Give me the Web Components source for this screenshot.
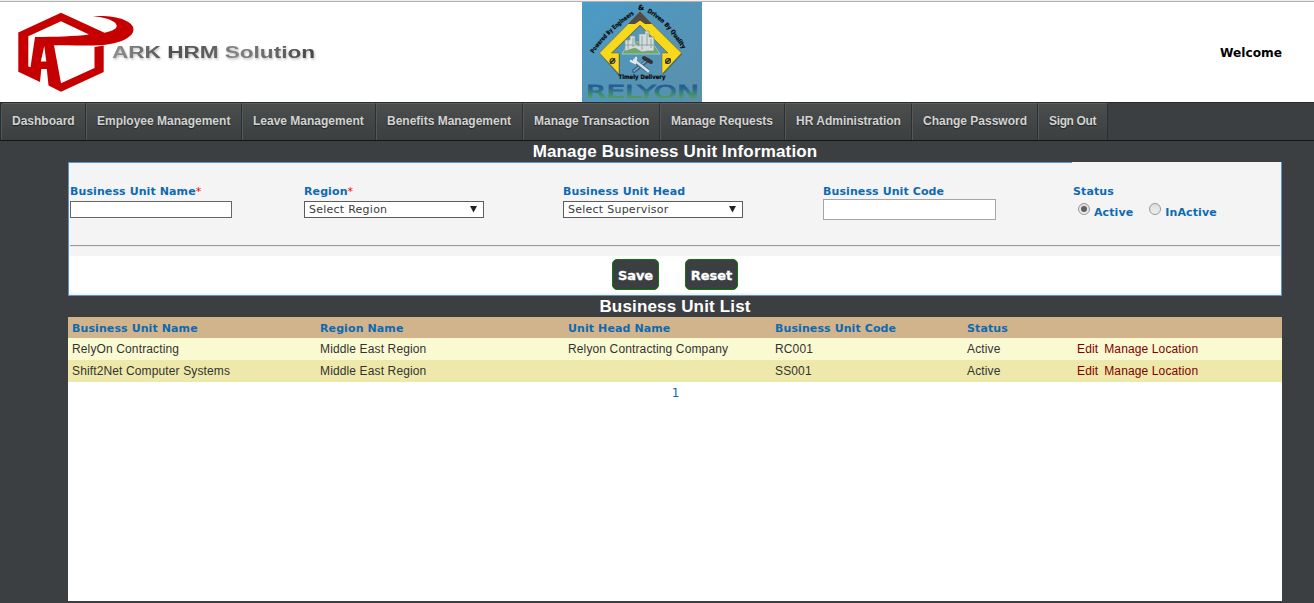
<!DOCTYPE html>
<html lang="en">
<head>
<meta charset="utf-8">
<title>Manage Business Unit Information</title>
<style>
html,body{margin:0;height:100%}
body{background:#3b3f42;overflow:hidden;font:12px "Liberation Sans",Arial,sans-serif}
</style>
</head>
<body>
<hrm-page></hrm-page>
<script>
const define = (name, html, setup) => customElements.define(name, class extends HTMLElement {
  constructor() {
    super();
    const t = document.createElement('template');
    t.innerHTML = html;
    this.attachShadow({mode: 'open'}).append(t.content.cloneNode(true));
  }
  connectedCallback() { if (setup) setup(this, this.shadowRoot); }
});

define('ark-logo', `
<style>:host{display:block;width:320px;height:90px}svg{display:block}
text{font:bold 16.800px "Liberation Sans",Arial,sans-serif}</style>
<svg width="320" height="90" viewBox="0 10 320 90">
 <defs>
  <linearGradient id="g" x1="0" x2="1"><stop offset="0" stop-color="#929292"/><stop offset=".28" stop-color="#505050"/><stop offset=".5" stop-color="#606060"/><stop offset=".6" stop-color="#858585"/><stop offset="1" stop-color="#444"/></linearGradient>
  <filter id="s" x="-5%" y="-30%" width="110%" height="180%"><feDropShadow dx="1" dy="1.5" stdDeviation=".8" flood-color="#888" flood-opacity=".55"/></filter>
 </defs>
 <g fill="#c60000">
  <path fill-rule="evenodd" d="M18.3 32.5 61 12.8 104.500 32.700C113 31 117 28.500 116.700 25.500 116 21 106 17.500 93 16.300 115 14.800 133.500 20.500 133.500 29.500 133.500 38 118 43.700 103 45 88 46 70 45.300 54 45.300L61 83.200 94.500 68V47L103.700 45.500V72L61 91.700 48.500 85.500 46.800 69H41.300L40 82 18.300 71.800ZM28.300 36.200V66.500L30.500 67.200 35 37C55 36.800 75 36.500 89 34.500L61 21.300ZM44.300 46 40.800 61.500H46.300Z"/>
 </g>
 <text x="112" y="58.300" textLength="203" lengthAdjust="spacingAndGlyphs" fill="url(#g)" filter="url(#s)">ARK HRM Solution</text>
</svg>`);

define('relyon-logo', `
<style>:host{display:block;width:120px;height:100px}svg{display:block}
.a{font:bold 6px "DejaVu Sans",sans-serif;fill:#080808;stroke:#080808;stroke-width:.2px}
.r{font:18.500px "DejaVu Sans",sans-serif}</style>
<svg width="120" height="100" viewBox="582 2 120 100">
 <defs>
  <linearGradient id="bg" x1="0" y1="0" x2="1" y2="1"><stop stop-color="#4a9bc6"/><stop offset="1" stop-color="#5c8fab"/></linearGradient>
  <linearGradient id="t" x1="0" y1="0" x2="0" y2="1"><stop offset=".3" stop-color="#275f91"/><stop offset=".65" stop-color="#3d8e72"/><stop offset="1" stop-color="#6daf50"/></linearGradient>
  <path id="l" d="M593.500 53.500Q609 31 636 13"/><path id="q" d="M647 12Q668 24 683 50"/>
 </defs>
 <rect x="582" y="2" width="120" height="100" fill="url(#bg)"/>
 <path d="M641 13 682.500 54 663 75V54H669L640 26 611.500 54H620V75H618L600 54Z" fill="#333" opacity=".4"/>
 <path d="M640 12 681.500 53 662 74V53H668L640 25 611.500 53H619V74L599.500 53Z" fill="#f7d81b" stroke="#74651c" stroke-width=".5"/>
 <path d="M640 11.500 652 24H645L640 20.500 635 24H628Z" fill="#514c43"/>
 <g stroke="#222" fill="#c8ad24"><circle cx="612.500" cy="61" r="2.600"/><circle cx="668" cy="61" r="2.600"/><path d="M610 63.500 615 58.500M665.500 63.500 670.500 58.500" stroke-width="1.500"/></g>
 <path d="M629 42H652L660 54H622Z" fill="#69a96a" stroke="#c6d5c4" stroke-width=".7"/>
 <path d="M625 51V40H630V36H635V43L639 46V34H645V31H649V37H654V51H647L642 52 635 48Z" fill="#d6dcda" stroke="#839990" stroke-width=".7"/>
 <path d="M628 39V49M633 38V47M642 36V50M647 33V46M651 39V48M625 45H654" stroke="#829b96" stroke-width=".8"/>
 <g fill="none" stroke-linecap="round"><path d="M648 60 634 71" stroke="#315c8b" stroke-width="4"/><path d="M646 61 634 71" stroke="#8dacc5" stroke-width="1.500"/><path d="M634 61 647 70" stroke="#48647c" stroke-width="4"/><path d="M634 60 648 71" stroke="#d9e2e6" stroke-width="2.500"/><path d="M644 58 651 62" stroke="#333" stroke-width="4"/><path d="M631 61 635 63 636 58" stroke="#e4e8e8" stroke-width="2.500"/></g>
 <text class="a"><textPath href="#l" textLength="57" lengthAdjust="spacingAndGlyphs">Powered By Engineers</textPath></text>
 <text class="a" x="638" y="9.800" style="font-size:7px">&amp;</text>
 <text class="a"><textPath href="#q" textLength="52" lengthAdjust="spacingAndGlyphs">Driven By Quality</textPath></text>
 <text class="a" x="618.500" y="79" textLength="47" lengthAdjust="spacingAndGlyphs">Timely Delivery</text>
 <text class="r" x="586" y="98" textLength="113" lengthAdjust="spacingAndGlyphs" fill="url(#t)" stroke="url(#t)" stroke-width=".9">RELYON</text>
</svg>`);

define('nav-item', `
<style>:host{display:block;box-sizing:border-box;height:37px;padding-left:10px;border-left:1px solid #555858;border-right:1px solid #2d3032;border-top:1px solid #5b5e5e;background:linear-gradient(#4b4e4d,#3b3f40);color:#d3d3d3;font:bold 12px/34px "Liberation Sans",Arial,sans-serif;white-space:nowrap;text-shadow:0 1px 1px #222}
:host(:first-child){border-radius:3px 0 0 3px}
:host(:last-child){letter-spacing:-.35px}</style><slot></slot>`, el => el.style.width = el.getAttribute('w') + 'px');

define('section-title', `
<style>:host{display:block;height:21px;text-align:center;color:#fff;font:bold 17px/22px "Liberation Sans",Arial,sans-serif;letter-spacing:.16px}</style><slot></slot>`);

define('form-field', `
<style>:host{display:block;font:bold 11px/15px "DejaVu Sans",Verdana,sans-serif;letter-spacing:.1px;color:#0d6ab2}
i{font-style:normal;font-weight:normal;color:red}label{display:block;height:14px;white-space:nowrap}</style>
<label><span></span><i></i></label><slot></slot>`, (el, r) => {
  r.querySelector('span').textContent = el.getAttribute('label');
  if (el.hasAttribute('required')) r.querySelector('i').textContent = '*';
});

define('text-box', `
<style>:host{display:block;box-sizing:border-box;background:#fff;border:1px solid #666;width:162px;height:17px;margin-top:3px}
:host([large]){width:173px;height:21px;border-color:#a5a5a5;margin-top:1px}</style>`);

define('select-box', `
<style>:host{display:flex;justify-content:space-between;box-sizing:border-box;background:#fff;border:1px solid #5c5c5c;width:180px;height:17px;margin-top:3px;padding:0 6px 0 4px;color:#3b3b3b;font:11px/16px "DejaVu Sans",Verdana,sans-serif;letter-spacing:.25px}
svg{margin-top:4px}</style><slot></slot><svg width="7" height="7"><path d="M0 0H7L3.500 6.500Z" fill="#222"/></svg>`);

define('radio-option', `
<style>:host{display:flex;gap:4px;line-height:14px}
b{box-sizing:border-box;width:12px;height:12px;border:1px solid #999;border-radius:50%;background:linear-gradient(#ddd,#eee);display:grid;place-items:center}
:host([checked]) b::after{content:"";width:6px;height:6px;border-radius:50%;background:#606060}
span{padding-top:3px}</style><b></b><span><slot></slot></span>`);

define('action-button', `
<style>:host{display:block;box-sizing:border-box;height:31px;border:1px solid #087b08;border-radius:5px;background:#3b3f42;color:#fff;font:bold 13px/31px "DejaVu Sans",Verdana,sans-serif;text-align:center;-webkit-text-stroke:.3px #fff;letter-spacing:-.05px}</style><slot></slot>`);

define('unit-row', `
<style>:host{display:grid;grid-template-columns:248px 248px 207px 192px 110px 1fr;padding-left:4px;height:22px;font:12px/22px "Liberation Sans",Arial,sans-serif;letter-spacing:.13px;color:#333;background:#fafad2;white-space:nowrap}
:host([alt]){background:#eee8aa}
:host([head]){background:#d2b48c;height:21px;font:bold 11px/23px "DejaVu Sans",Verdana,sans-serif;letter-spacing:.1px;color:#0d6ab2}
.links{display:flex;gap:6px;color:maroon}</style>`, (el, r) => {
  el.getAttribute('cells').split('|').forEach(text => {
    const s = document.createElement('span'); s.textContent = text; r.append(s);
  });
  if (!el.hasAttribute('head')) {
    const links = document.createElement('span'); links.className = 'links';
    links.innerHTML = '<span>Edit</span><span>Manage Location</span>'; r.append(links);
  }
});

define('hrm-page', `
<style>
:host{display:block}
header{box-sizing:border-box;height:102px;background:#fff;border-top:1px solid #eee;display:grid;grid-template-columns:582px 120px 1fr;box-shadow:inset 0 1px #b2b2b2}
ark-logo{margin-top:9px}relyon-logo{margin-top:1px}
.welcome{justify-self:end;margin:44px 32px 0 0;font:bold 12.200px/16px "DejaVu Sans",Verdana,sans-serif;color:#000}
nav{box-sizing:border-box;height:39px;display:flex;border:solid #2a2d2f;border-width:1px 0 1px 1px;border-bottom-color:#141516}
main{width:1214px;margin-left:68px}
.panel{box-sizing:border-box;height:134px;background:#f4f4f4 linear-gradient(#5b93cb,#5b93cb) 0 0/1003px 1px no-repeat;border:1px solid #5b93cb;border-top:0;display:flex;flex-direction:column}
.fields{height:61px;padding:22px 0 0 1px;display:grid;grid-template-columns:234px 259px 260px 250px 1fr}
.status{display:flex;gap:16px;margin:5px 0 0 5px}
.rule{height:1px;margin:0 1px;background:#999;box-shadow:0 1px #e9eaea}
.buttons{height:37px;margin-top:10px;background:#fff;display:flex;padding:3px 0 0 543px;box-sizing:border-box;gap:26px}
.list{height:284px;background:#fff}
.pager{text-align:center;color:#0d6ab2;font:12px/22px "DejaVu Sans",sans-serif;padding-left:1px}
</style>
<header><ark-logo></ark-logo><relyon-logo></relyon-logo><div class="welcome">Welcome</div></header>
<nav>
<nav-item w="85">Dashboard</nav-item><nav-item w="156">Employee Management</nav-item><nav-item w="134">Leave Management</nav-item><nav-item w="147">Benefits Management</nav-item><nav-item w="137">Manage Transaction</nav-item><nav-item w="125">Manage Requests</nav-item><nav-item w="127">HR Administration</nav-item><nav-item w="126">Change Password</nav-item><nav-item w="70">Sign Out</nav-item>
</nav>
<main>
<section-title>Manage Business Unit Information</section-title>
<div class="panel">
 <div class="fields">
  <form-field label="Business Unit Name" required><text-box></text-box></form-field>
  <form-field label="Region" required><select-box>Select Region</select-box></form-field>
  <form-field label="Business Unit Head"><select-box>Select Supervisor</select-box></form-field>
  <form-field label="Business Unit Code"><text-box large></text-box></form-field>
  <form-field label="Status"><div class="status"><radio-option checked>Active</radio-option><radio-option>InActive</radio-option></div></form-field>
 </div>
 <div class="rule"></div>
 <div class="buttons"><action-button style="width:47px">Save</action-button><action-button style="width:53px">Reset</action-button></div>
</div>
<section-title>Business Unit List</section-title>
<div class="list">
 <unit-row head cells="Business Unit Name|Region Name|Unit Head Name|Business Unit Code|Status"></unit-row>
 <unit-row cells="RelyOn Contracting|Middle East Region|Relyon Contracting Company|RC001|Active"></unit-row>
 <unit-row alt cells="Shift2Net Computer Systems|Middle East Region||SS001|Active"></unit-row>
 <div class="pager">1</div>
</div>
</main>`);
</script>
</body>
</html>
